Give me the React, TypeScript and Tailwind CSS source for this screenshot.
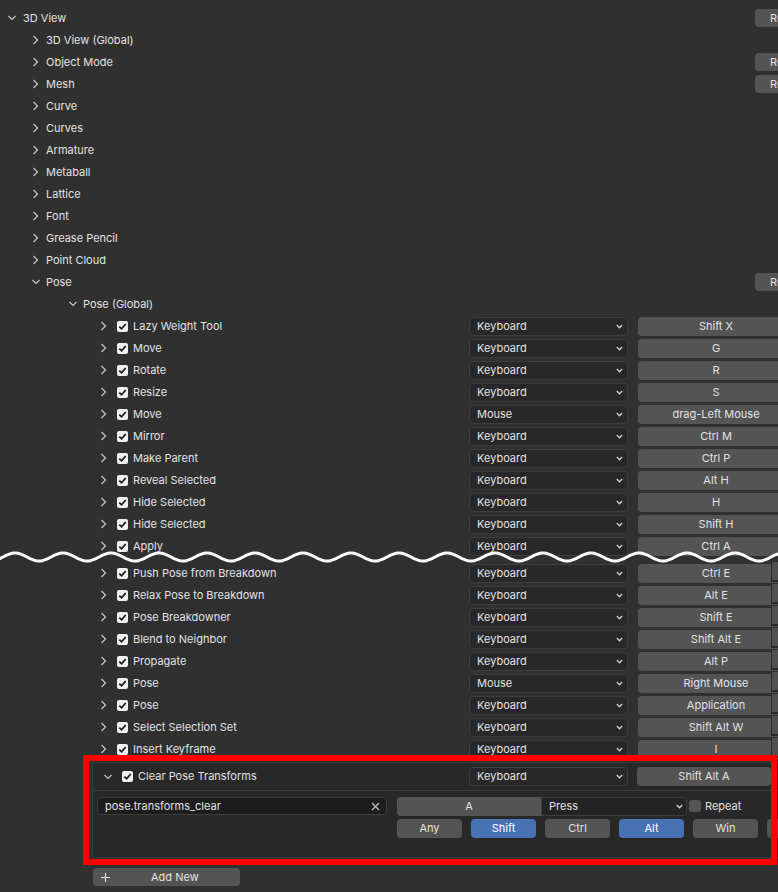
import React from 'react';

type Item = { name: string; type: string; keys: string };

const upperItems: Item[] = [
  { name: 'Lazy Weight Tool', type: 'Keyboard', keys: 'Shift X' },
  { name: 'Move', type: 'Keyboard', keys: 'G' },
  { name: 'Rotate', type: 'Keyboard', keys: 'R' },
  { name: 'Resize', type: 'Keyboard', keys: 'S' },
  { name: 'Move', type: 'Mouse', keys: 'drag-Left Mouse' },
  { name: 'Mirror', type: 'Keyboard', keys: 'Ctrl M' },
  { name: 'Make Parent', type: 'Keyboard', keys: 'Ctrl P' },
  { name: 'Reveal Selected', type: 'Keyboard', keys: 'Alt H' },
  { name: 'Hide Selected', type: 'Keyboard', keys: 'H' },
  { name: 'Hide Selected', type: 'Keyboard', keys: 'Shift H' },
  { name: 'Apply', type: 'Keyboard', keys: 'Ctrl A' },
];

const lowerItems: Item[] = [
  { name: 'Push Pose from Breakdown', type: 'Keyboard', keys: 'Ctrl E' },
  { name: 'Relax Pose to Breakdown', type: 'Keyboard', keys: 'Alt E' },
  { name: 'Pose Breakdowner', type: 'Keyboard', keys: 'Shift E' },
  { name: 'Blend to Neighbor', type: 'Keyboard', keys: 'Shift Alt E' },
  { name: 'Propagate', type: 'Keyboard', keys: 'Alt P' },
  { name: 'Pose', type: 'Mouse', keys: 'Right Mouse' },
  { name: 'Pose', type: 'Keyboard', keys: 'Application' },
  { name: 'Select Selection Set', type: 'Keyboard', keys: 'Shift Alt W' },
  { name: 'Insert Keyframe', type: 'Keyboard', keys: 'I' },
];

const categories: { name: string; restore?: boolean }[] = [
  { name: '3D View (Global)' },
  { name: 'Object Mode', restore: true },
  { name: 'Mesh', restore: true },
  { name: 'Curve' },
  { name: 'Curves' },
  { name: 'Armature' },
  { name: 'Metaball' },
  { name: 'Lattice' },
  { name: 'Font' },
  { name: 'Grease Pencil' },
  { name: 'Point Cloud' },
];

function ChevronRight() {
  return (
    <svg width="8" height="10" viewBox="0 0 8 10" className="shrink-0">
      <path d="M1.5 1 L5.5 5 L1.5 9" fill="none" stroke="#c8c8c8" strokeWidth="1.2" />
    </svg>
  );
}

function ChevronDown() {
  return (
    <svg width="8" height="6" viewBox="0 0 8 6" className="shrink-0">
      <path d="M0.5 1 L4 4.5 L7.5 1" fill="none" stroke="#c8c8c8" strokeWidth="1.2" />
    </svg>
  );
}

function SmallCaret() {
  return (
    <svg width="7" height="5" viewBox="0 0 7 5" className="shrink-0">
      <path d="M0.8 1 L3.5 3.8 L6.2 1" fill="none" stroke="#d0d0d0" strokeWidth="1.3" />
    </svg>
  );
}

function Check({ className = '' }: { className?: string }) {
  return (
    <span className={`flex h-[11px] w-[11px] shrink-0 items-center justify-center rounded-[2px] bg-[#f0f0f0] ${className}`}>
      <svg width="9" height="9" viewBox="0 0 9 9">
        <path d="M1.3 4.6 L3.6 6.8 L7.7 2" fill="none" stroke="#1e1e1e" strokeWidth="1.8" />
      </svg>
    </span>
  );
}

function Dropdown({ label }: { label: string }) {
  return (
    <div className="flex h-[19px] w-[159px] shrink-0 items-center justify-between rounded-[4px] border border-[#3d3d3d] bg-[#282828] pl-[7px] pr-[4px]">
      <span>{label}</span>
      <SmallCaret />
    </div>
  );
}

function KeyRow({ item, lower }: { item: Item; lower?: boolean }) {
  return (
    <div className="flex h-[22px] items-center">
      <div className="flex w-[469px] shrink-0 items-center pl-[100px]">
        <ChevronRight />
        <Check className="ml-[9px]" />
        <span className="ml-[5px] whitespace-nowrap">{item.name}</span>
      </div>
      <Dropdown label={item.type} />
      <div className="relative ml-[10px] flex h-[19px] w-[156px] shrink-0 items-center justify-center rounded-[4px] bg-[#545454]">
        {item.keys}
        {lower && (
          <span className="absolute left-[133px] top-[-2px] h-[20px] w-[23px] border-b-2 border-l border-[#2a2a2a] bg-[#505050]" />
        )}
      </div>
    </div>
  );
}

function RestoreButton() {
  return (
    <div className="absolute left-[755px] top-[2px] flex h-[18px] w-[70px] items-center rounded-[4px] bg-[#545454] pl-[15px]">
      Restore
    </div>
  );
}

function wavePath() {
  const pts: string[] = [];
  for (let x = -4; x <= 784; x += 2) {
    const y = 9 + 4 * Math.sin((2 * Math.PI * (x - 27)) / 48);
    pts.push(`${x === -4 ? 'M' : 'L'}${x} ${y.toFixed(2)}`);
  }
  return pts.join(' ');
}

export default function App() {
  return (
    <div
      className="relative h-[892px] w-[778px] overflow-hidden bg-[#303030] text-[11px] text-[#e2e2e2]"
      style={{ fontFamily: 'Inter, "Noto Sans", sans-serif' }}
    >
      <div className="flex flex-col pt-[7px]">
        <div className="relative flex h-[22px] items-center pl-[8px]">
          <ChevronDown />
          <span className="ml-[7px]">3D View</span>
          <RestoreButton />
        </div>
        {categories.map((c) => (
          <div key={c.name} className="relative flex h-[22px] items-center pl-[32px]">
            <ChevronRight />
            <span className="ml-[6px]">{c.name}</span>
            {c.restore && <RestoreButton />}
          </div>
        ))}
        <div className="relative flex h-[22px] items-center pl-[32px]">
          <ChevronDown />
          <span className="ml-[6px]">Pose</span>
          <RestoreButton />
        </div>
        <div className="flex h-[22px] items-center pl-[69px]">
          <ChevronDown />
          <span className="ml-[6px]">Pose (Global)</span>
        </div>
        {upperItems.map((it, i) => (
          <KeyRow key={'u' + i} item={it} />
        ))}
        <div className="h-[5px]" />
        {lowerItems.map((it, i) => (
          <KeyRow key={'l' + i} item={it} lower />
        ))}

        <div className="ml-[92px] mt-[2px] h-[96px] w-[700px] rounded-[4px] border border-[#3a3a3a] bg-[#282828]">
          <div className="flex h-[28px] items-center border-b border-[#3a3a3a]">
            <div className="flex w-[376px] shrink-0 items-center pl-[11px]">
              <ChevronDown />
              <Check className="ml-[10px]" />
              <span className="ml-[5px]">Clear Pose Transforms</span>
            </div>
            <Dropdown label="Keyboard" />
            <div className="ml-[9px] flex h-[19px] w-[134px] shrink-0 items-center justify-center rounded-[4px] bg-[#545454]">
              Shift Alt A
            </div>
          </div>
          <div className="mt-[6px] flex h-[18px] items-center pl-[4px]">
            <div className="flex h-[18px] w-[290px] shrink-0 items-center justify-between rounded-[4px] border border-[#3d3d3d] bg-[#1d1d1d] pl-[7px] pr-[6px]">
              <span>pose.transforms_clear</span>
              <svg width="9" height="9" viewBox="0 0 9 9">
                <path d="M1 1 L8 8 M8 1 L1 8" stroke="#c8c8c8" strokeWidth="1.1" />
              </svg>
            </div>
            <div className="ml-[10px] flex h-[19px] w-[144px] shrink-0 items-center justify-center rounded-l-[4px] bg-[#545454]">
              A
            </div>
            <div className="flex h-[19px] w-[146px] shrink-0 items-center justify-between rounded-r-[4px] border border-[#3d3d3d] bg-[#232323] pl-[7px] pr-[3px]">
              <span>Press</span>
              <SmallCaret />
            </div>
            <span className="ml-[2px] h-[12px] w-[12px] shrink-0 rounded-[3px] bg-[#545454]" />
            <span className="ml-[4px]">Repeat</span>
          </div>
          <div className="mt-[4px] flex h-[19px] items-center gap-[9px] pl-[304px]">
            {[
              ['Any', false],
              ['Shift', true],
              ['Ctrl', false],
              ['Alt', true],
              ['Win', false],
              ['OSKey', false],
            ].map(([label, on]) => (
              <div
                key={label as string}
                className={`flex h-[19px] w-[65px] shrink-0 items-center justify-center rounded-[4px] ${
                  on ? 'bg-[#4772b3] text-white' : 'bg-[#545454]'
                }`}
              >
                {label}
              </div>
            ))}
          </div>
        </div>

        <div className="ml-[93px] mt-[10px] flex h-[18px] w-[147px] items-center rounded-[4px] bg-[#545454] pl-[8px]">
          <svg width="9" height="9" viewBox="0 0 9 9">
            <path d="M4.5 0 V9 M0 4.5 H9" stroke="#e0e0e0" strokeWidth="1.2" />
          </svg>
          <span className="ml-[41px]">Add New</span>
        </div>
      </div>

      {/* cut marker between the two screenshots */}
      <svg className="pointer-events-none absolute left-0 top-[548px]" width="778" height="18" viewBox="0 0 778 18">
        <path d={wavePath()} fill="none" stroke="#ffffff" strokeWidth="3" />
      </svg>

      {/* red highlight */}
      <div className="pointer-events-none absolute left-[83px] top-[755px] h-[110px] w-[694px] border-[6px] border-[#ff0000]" />
    </div>
  );
}
